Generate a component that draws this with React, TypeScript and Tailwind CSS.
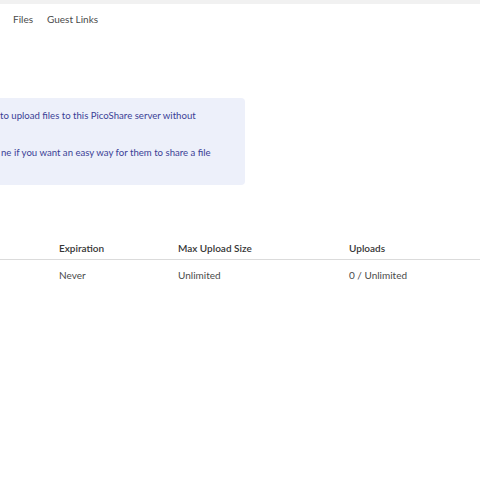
import React from "react";

const columns = [
    { key: "expiration", title: "Expiration", width: "w-[119px]" },
    { key: "maxSize", title: "Max Upload Size", width: "w-[171px]" },
    { key: "uploads", title: "Uploads", width: "flex-1" },
];

const guestLinks = [
    { id: 1, expiration: "Never", maxSize: "Unlimited", uploads: "0 / Unlimited" },
];

const App = () => {
    return (
        <div className="w-[480px] h-[480px] overflow-hidden bg-white text-[10px] text-[#363636]" style={{ fontFamily: "Lato, 'Noto Sans', sans-serif" }}>
            {/* Top bar */}
            <div className="h-1 bg-[#f1f1f1]" />
            <nav className="flex items-center gap-[14px] pl-[13px] h-[30px]">
                <a className="text-[#4a4a4a]">Files</a>
                <a className="text-[#4a4a4a]">Guest Links</a>
            </nav>

            {/* Info box */}
            <div className="mt-[64px] w-[245px] h-[87px] bg-[#edf0fa] rounded-r-[4px] text-[#3b3f96] text-[9.6px] pt-[12px]">
                <p className="leading-[12px]">to upload files to this PicoShare server without</p>
                <p className="leading-[12px] mt-[25px] pl-[1px]">ne if you want an easy way for them to share a file</p>
            </div>

            {/* Guest links table */}
            <div className="mt-[53px]">
                <div className="flex h-[22px] items-center border-b border-[#dbdbdb] pl-[59px] font-semibold text-[#363636]">
                    {columns.map((col) => (
                        <div key={col.key} className={col.width}>{col.title}</div>
                    ))}
                </div>
                {guestLinks.map((link) => (
                    <div key={link.id} className="flex h-[30px] items-center pl-[59px] text-[#4a4a4a]">
                        <div className="w-[119px]">{link.expiration}</div>
                        <div className="w-[171px]">{link.maxSize}</div>
                        <div className="flex-1">{link.uploads}</div>
                    </div>
                ))}
            </div>
        </div>
    );
};

export default App;
